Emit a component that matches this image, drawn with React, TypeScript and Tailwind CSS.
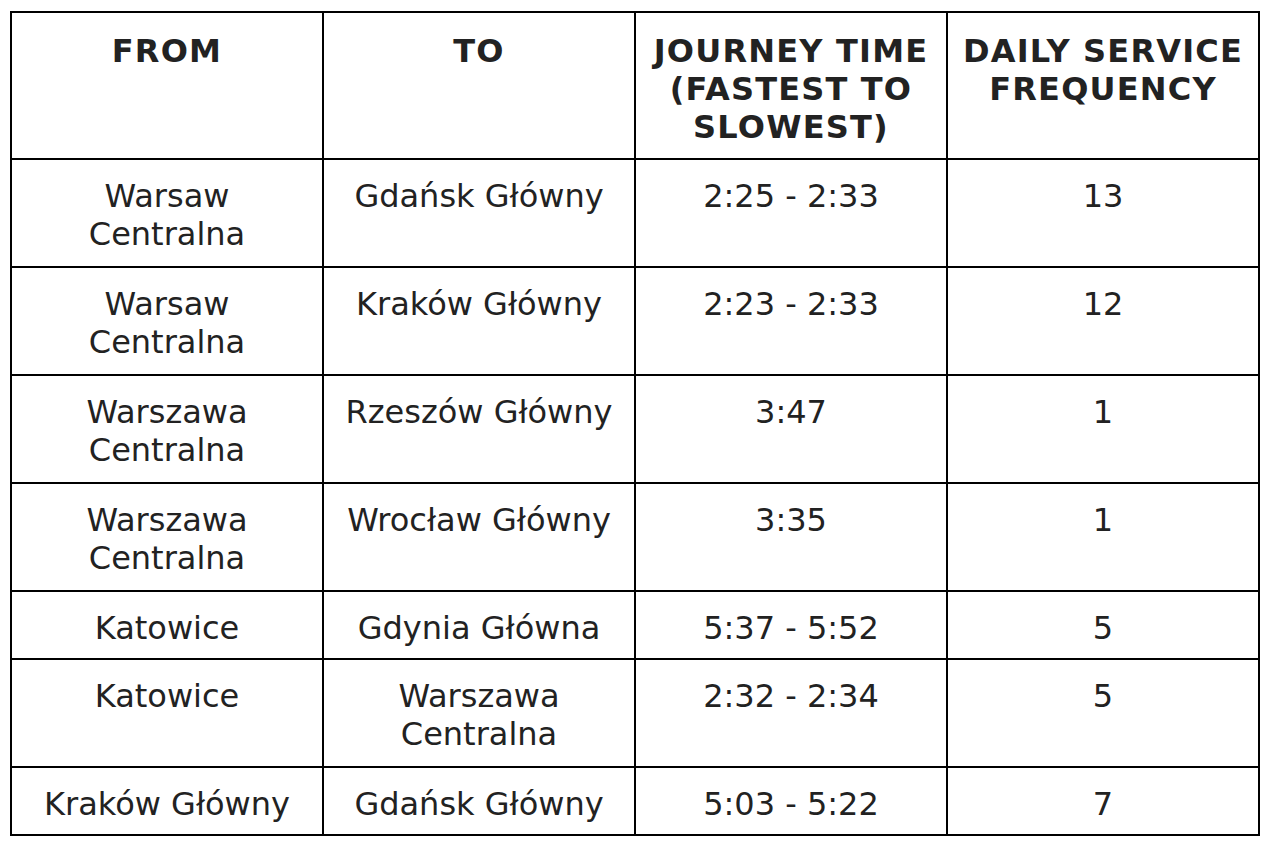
const header = ["FROM", "TO", "JOURNEY TIME (FASTEST TO SLOWEST)", "DAILY SERVICE FREQUENCY"]

// tall = the row wraps to two lines in the original
const rows = [
  { tall: true, cells: ["Warsaw Centralna", "Gdańsk Główny", "2:25 - 2:33", "13"] },
  { tall: true, cells: ["Warsaw Centralna", "Kraków Główny", "2:23 - 2:33", "12"] },
  { tall: true, cells: ["Warszawa Centralna", "Rzeszów Główny", "3:47", "1"] },
  { tall: true, cells: ["Warszawa Centralna", "Wrocław Główny", "3:35", "1"] },
  { tall: false, cells: ["Katowice", "Gdynia Główna", "5:37 - 5:52", "5"] },
  { tall: true, cells: ["Katowice", "Warszawa Centralna", "2:32 - 2:34", "5"] },
  { tall: false, cells: ["Kraków Główny", "Gdańsk Główny", "5:03 - 5:22", "7"] },
]

export default function App() {
  return (
    <div className="min-h-[848px] bg-white pl-[10px] pt-[11px] text-[#222]" style={{ fontFamily: '"DejaVu Sans", Verdana, sans-serif' }}>
      <table className="w-[1250px] table-fixed border-collapse border-2 border-black text-center">
        <thead>
          <tr>
            {header.map((h) => (
              <th
                key={h}
                className="border-2 border-black px-[12px] pt-[19px] pb-[12px] align-top text-[32px] leading-[38px] font-bold tracking-[1.2px]"
              >
                {h}
              </th>
            ))}
          </tr>
        </thead>
        <tbody>
          {rows.map((r, i) => (
            <tr key={i}>
              {r.cells.map((c, j) => (
                <td
                  key={j}
                  className={`border-2 border-black px-[14px] pt-[17px] align-top text-[32px] leading-[38px] ${
                    r.tall ? "pb-[13px]" : "pb-[11px]"
                  }`}
                >
                  {c}
                </td>
              ))}
            </tr>
          ))}
        </tbody>
      </table>
    </div>
  )
}
